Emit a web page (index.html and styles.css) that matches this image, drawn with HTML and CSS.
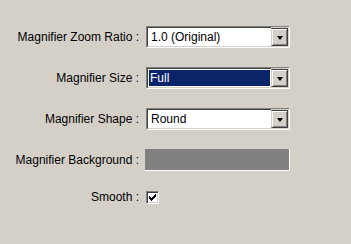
FILE: index.html
```html
<!DOCTYPE html>
<html>
<head>
<meta charset="utf-8">
<link rel="stylesheet" href="styles.css">
</head>
<body>
<div class="form">
  <div class="label">Magnifier Zoom Ratio :</div>
  <div class="combo">
    <div class="field"><span class="value">1.0 (Original)</span></div>
    <div class="arrow"><span class="tri"></span></div>
  </div>

  <div class="label">Magnifier Size :</div>
  <div class="combo">
    <div class="field"><span class="value selected">Full</span></div>
    <div class="arrow"><span class="tri"></span></div>
  </div>

  <div class="label">Magnifier Shape :</div>
  <div class="combo">
    <div class="field"><span class="value">Round</span></div>
    <div class="arrow"><span class="tri"></span></div>
  </div>

  <div class="label">Magnifier Background :</div>
  <div class="swatch"></div>

  <div class="label">Smooth :</div>
  <div class="check">
    <svg width="7" height="7" viewBox="0 0 7 7" shape-rendering="crispEdges" fill="#000">
      <rect x="6" y="0" width="1" height="3"/>
      <rect x="5" y="1" width="1" height="3"/>
      <rect x="4" y="2" width="1" height="3"/>
      <rect x="3" y="3" width="1" height="3"/>
      <rect x="2" y="4" width="1" height="3"/>
      <rect x="1" y="3" width="1" height="3"/>
      <rect x="0" y="2" width="1" height="3"/>
    </svg>
  </div>
</div>
</body>
</html>
```

FILE: styles.css
```css
html, body {
  margin: 0;
  padding: 0;
  background: #d4d0c8;
  width: 351px;
  height: 244px;
  overflow: hidden;
}
.form {
  display: grid;
  grid-template-columns: 139px 144px;
  grid-template-rows: 22px 22px 22px 22px 14px;
  column-gap: 7px;
  row-gap: 19px;
  padding-top: 26px;
  font-family: "Liberation Sans", Arial, sans-serif;
  font-size: 12px;
  color: #000;
}
.label {
  display: flex;
  align-items: center;
  justify-content: flex-end;
  white-space: nowrap;
}
.combo {
  display: flex;
  box-sizing: border-box;
  height: 22px;
  border: 1px solid;
  border-color: #808080 #ffffff #ffffff #808080;
}
.field {
  flex: 1;
  display: flex;
  box-sizing: border-box;
  border: 1px solid;
  border-right: 0;
  border-color: #404040 #d4d0c8 #d4d0c8 #404040;
  background: #fff;
  padding: 1px;
}
.value {
  flex: 1;
  display: flex;
  align-items: center;
  padding-left: 2px;
  line-height: 1;
}
.value.selected {
  background: #0a246a;
  color: #fff;
  padding-left: 1px;
}
.arrow {
  width: 17px;
  box-sizing: border-box;
  display: flex;
  align-items: center;
  justify-content: center;
  background: #d4d0c8;
  border: 1px solid;
  border-color: #404040 #404040 #404040 #d4d0c8;
  margin: 1px 1px 1px 0;
  box-shadow: inset 1px 1px 0 #fff, inset -1px -1px 0 #808080;
}
.tri {
  width: 0;
  height: 0;
  border-left: 3.5px solid transparent;
  border-right: 3.5px solid transparent;
  border-top: 4px solid #000;
  margin-top: 1px;
}
.swatch {
  margin-left: -1px;
  width: 145px;
  box-sizing: border-box;
  height: 22px;
  background: #808080;
  border-right: 1px solid #fff;
  border-bottom: 1px solid #fff;
}
.check {
  align-self: start;
  margin-top: 1px;
  width: 13px;
  height: 13px;
  box-sizing: border-box;
  border: 1px solid;
  border-color: #808080 #fff #fff #808080;
  box-shadow: inset 1px 1px 0 #404040, inset -1px -1px 0 #d4d0c8;
  background: #fff;
  display: flex;
  align-items: center;
  justify-content: center;
}
.check svg {
  display: block;
}
```
